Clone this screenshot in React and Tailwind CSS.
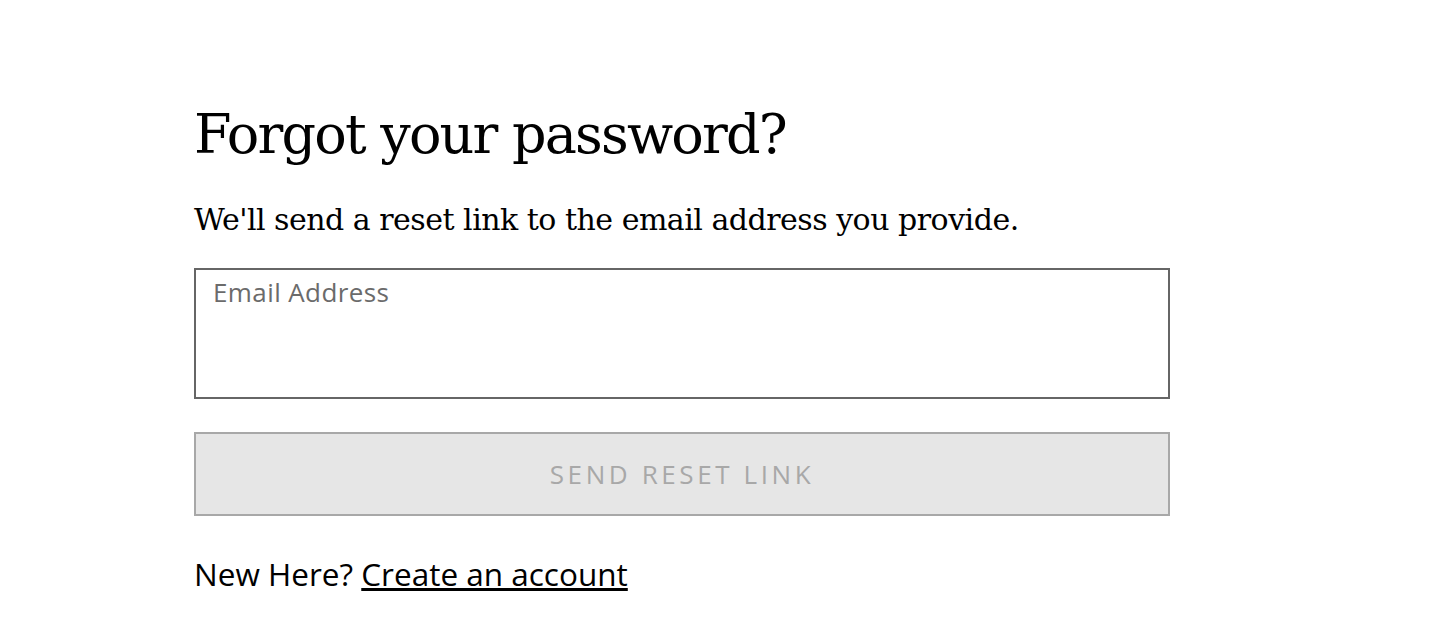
export default function App() {
  return (
    <div className="min-h-[624px] w-full bg-white">
      <div className="ml-[194px] w-[976px] pt-[98px]">
        <h1 className="font-['DejaVu_Serif',serif] text-[54px] leading-[74px] tracking-[-1.8px] text-black">
          Forgot your password?
        </h1>
        <p className="mt-[28px] font-['DejaVu_Serif',serif] text-[30px] leading-[40px] tracking-[-0.5px] text-black">
          We'll send a reset link to the email address you provide.
        </p>
        <div className="mt-[28px] h-[131px] border-2 border-[#666666] px-[17px] pt-[3px]">
          <span className="font-['Open_Sans',sans-serif] text-[26px] tracking-[0.4px] text-[#6b6b6b]">Email Address</span>
        </div>
        <button className="mt-[33px] flex h-[84px] w-full items-center justify-center border-2 border-[#a8a8a8] bg-[#e6e6e6] font-['Open_Sans',sans-serif] text-[26px] tracking-[3.6px] text-[#a8a8a8]">
          SEND RESET LINK
        </button>
        <p className="mt-[36px] font-['Open_Sans',sans-serif] text-[31.5px] leading-[44px] text-black">
          New Here? <a className="underline">Create an account</a>
        </p>
      </div>
    </div>
  );
}
